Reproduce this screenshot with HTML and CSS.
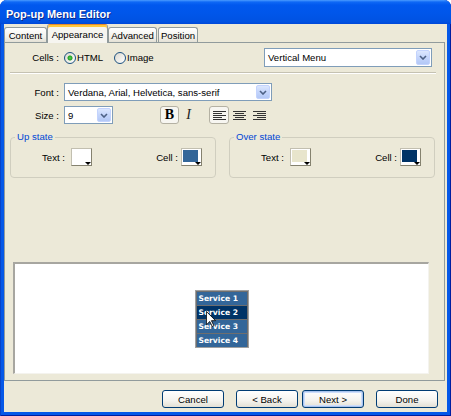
FILE: index.html
```html
<!DOCTYPE html>
<html>
<head>
<meta charset="utf-8">
<title>Pop-up Menu Editor</title>
<link rel="stylesheet" href="styles.css">
</head>
<body>
<div class="window">
  <div class="titlebar">Pop-up Menu Editor</div>
  <div class="client">
    <div class="tabs">
      <div class="tab t-content">Content</div>
      <div class="tab active t-appear">Appearance</div>
      <div class="tab t-adv">Advanced</div>
      <div class="tab t-pos">Position</div>
    </div>
    <div class="panel">
      <div class="row row-cells">
        <span class="lbl">Cells :</span>
        <span class="radio checked"></span><span class="rtext rtext1">HTML</span>
        <span class="radio"></span><span class="rtext">Image</span>
        <div class="select sel-type">
          <span class="val">Vertical Menu</span>
          <span class="dd"><svg width="8" height="5" viewBox="0 0 8 5"><polyline points="1,1 4,4 7,1" fill="none" stroke="#4d6185" stroke-width="1.6"/></svg></span>
        </div>
      </div>
      <div class="sep"></div>
      <div class="row row-font">
        <span class="lbl">Font :</span>
        <div class="select sel-font">
          <span class="val">Verdana, Arial, Helvetica, sans-serif</span>
          <span class="dd"><svg width="8" height="5" viewBox="0 0 8 5"><polyline points="1,1 4,4 7,1" fill="none" stroke="#4d6185" stroke-width="1.6"/></svg></span>
        </div>
      </div>
      <div class="row row-size">
        <span class="lbl">Size :</span>
        <div class="select sel-size">
          <span class="val">9</span>
          <span class="dd"><svg width="8" height="5" viewBox="0 0 8 5"><polyline points="1,1 4,4 7,1" fill="none" stroke="#4d6185" stroke-width="1.6"/></svg></span>
        </div>
        <div class="tbtn pressed tb-bold">B</div>
        <div class="tbtn tb-ital">I</div>
        <div class="tbtn pressed tb-align first-align">
          <svg width="13" height="9" viewBox="0 0 13 9"><g stroke="#333" stroke-width="1"><line x1="0" y1="0.5" x2="13" y2="0.5"/><line x1="0" y1="2.5" x2="9" y2="2.5"/><line x1="0" y1="4.5" x2="13" y2="4.5"/><line x1="0" y1="6.5" x2="9" y2="6.5"/><line x1="0" y1="8.5" x2="13" y2="8.5"/></g></svg>
        </div>
        <div class="tbtn tb-align">
          <svg width="13" height="9" viewBox="0 0 13 9"><g stroke="#333" stroke-width="1"><line x1="0" y1="0.5" x2="13" y2="0.5"/><line x1="2" y1="2.5" x2="11" y2="2.5"/><line x1="0" y1="4.5" x2="13" y2="4.5"/><line x1="2" y1="6.5" x2="11" y2="6.5"/><line x1="0" y1="8.5" x2="13" y2="8.5"/></g></svg>
        </div>
        <div class="tbtn tb-align">
          <svg width="13" height="9" viewBox="0 0 13 9"><g stroke="#333" stroke-width="1"><line x1="0" y1="0.5" x2="13" y2="0.5"/><line x1="4" y1="2.5" x2="13" y2="2.5"/><line x1="0" y1="4.5" x2="13" y2="4.5"/><line x1="4" y1="6.5" x2="13" y2="6.5"/><line x1="0" y1="8.5" x2="13" y2="8.5"/></g></svg>
        </div>
      </div>
      <div class="groups">
        <fieldset class="group">
          <legend>Up state</legend>
          <div class="gin">
            <span class="glbl">Text :</span>
            <span class="swatch"><span class="fill" style="background:#ffffff"></span></span>
            <span class="glbl cell-lbl">Cell :</span>
            <span class="swatch"><span class="fill" style="background:#336699"></span></span>
          </div>
        </fieldset>
        <fieldset class="group">
          <legend>Over state</legend>
          <div class="gin">
            <span class="glbl">Text :</span>
            <span class="swatch"><span class="fill" style="background:#e8e5cc"></span></span>
            <span class="glbl cell-lbl">Cell :</span>
            <span class="swatch"><span class="fill" style="background:#003366"></span></span>
          </div>
        </fieldset>
      </div>
      <div class="preview">
        <div class="menu">
          <div class="mi">Service 1</div>
          <div class="mi over">Service 2</div>
          <div class="mi">Service 3</div>
          <div class="mi">Service 4</div>
        </div>
        <svg class="cursor" width="10" height="16" viewBox="0 0 12 19"><path d="M0.5,0.5 L0.5,16.5 L4.5,12.5 L7.5,18.5 L9.5,17.5 L6.5,11.5 L11.5,11.5 Z" fill="#fff" stroke="#000" stroke-width="1"/></svg>
      </div>
    </div>
    <div class="footer">
      <div class="btn">Cancel</div>
      <div class="btn b-back">&lt; Back</div>
      <div class="btn b-next default">Next &gt;</div>
      <div class="btn b-done">Done</div>
    </div>
  </div>
</div>
</body>
</html>
```
FILE: styles.css
```css
* { box-sizing: border-box; }
html, body { margin: 0; padding: 0; background: #fff; }
body {
  font-family: "Liberation Sans", Arial, sans-serif;
  font-size: 9.6px;
  color: #000;
}
.window {
  width: 451px;
  height: 416px;
  display: flex;
  flex-direction: column;
  background: #0558e8;
  border-radius: 7px 7px 0 0;
  overflow: hidden;
  box-shadow: inset 1px 0 #0843c8, inset -1px 0 #001ea0, inset 0 -1px #001ea0;
}
.titlebar {
  height: 24px;
  flex: none;
  display: flex;
  align-items: center;
  padding: 3px 0 0 6px;
  color: #fff;
  font-weight: bold;
  font-size: 11px;
  text-shadow: 1px 1px #0c2a8c;
  background: linear-gradient(#4a9bff 0, #0e68f6 2px, #0058ee 5px, #0056ea 55%, #0052e2 90%, #0048d8 100%);
}
.client {
  flex: 1;
  margin: 0 4px 4px 4px;
  background: #ece9d8;
  display: flex;
  flex-direction: column;
}
.tabs {
  height: 18px;
  flex: none;
  display: flex;
  align-items: flex-end;
  position: relative;
  z-index: 1;
}
.tab {
  height: 15px;
  border: 1px solid #919b9c;
  border-bottom: none;
  border-radius: 3px 3px 0 0;
  background: linear-gradient(#ffffff, #f3f2ec 60%, #e4e1d6);
  display: flex;
  align-items: center;
  justify-content: center;
  padding-top: 1px;
}
.t-content { width: 43px; }
.t-appear { width: 61px; }
.t-adv { width: 49px; margin-right: 1px; }
.t-pos { width: 40px; }
.tab.active {
  height: 19px;
  margin-bottom: -1px;
  background: #f6f5f0;
  border-top: 1px solid #e68b2c;
  box-shadow: inset 0 2px #ffc83c;
  padding-top: 0;
}
.panel {
  height: 339px;
  flex: none;
  margin-right: 2px;
  border: 1px solid #919b9c;
  display: flex;
  flex-direction: column;
  padding-top: 5px;
}
.row {
  display: flex;
  align-items: center;
  flex: none;
}
.lbl {
  width: 54px;
  margin-right: 5px;
  text-align: right;
  flex: none;
}
.row-cells { height: 19px; padding-right: 12px; }
.radio {
  width: 12px;
  height: 12px;
  border-radius: 50%;
  border: 1px solid #1c5180;
  background: linear-gradient(135deg, #dcd9cf, #ffffff);
  margin-right: 1px;
  flex: none;
}
.radio.checked {
  background: radial-gradient(circle, #5cd05c 0, #21a121 2px, rgba(33,161,33,0) 3px), linear-gradient(135deg, #dcd9cf, #ffffff);
}
.rtext1 { width: 37px; }
.select {
  display: flex;
  align-items: stretch;
  border: 1px solid #7f9db9;
  background: #fff;
  padding: 1px;
  flex: none;
}
.select .val {
  flex: 1;
  padding-left: 2px;
  display: flex;
  align-items: center;
  white-space: nowrap;
  overflow: hidden;
}
.select .dd {
  width: 14px;
  flex: none;
  border: 1px solid #c3d3fd;
  border-radius: 2px;
  background: linear-gradient(#dce7fe, #c4d5fb 50%, #b3c8f6);
  display: flex;
  align-items: center;
  justify-content: center;
}
.sel-type { margin-left: auto; width: 168px; height: 19px; }
.sep {
  flex: none;
  height: 2px;
  margin: 5px 8px 0 5px;
  border-top: 1px solid #c5c2b2;
  border-bottom: 1px solid #ffffff;
}
.row-font { margin-top: 9px; height: 18px; }
.sel-font { width: 208px; height: 18px; }
.row-size { margin-top: 5px; height: 18px; }
.sel-size { width: 49px; height: 18px; }
.tbtn {
  width: 19px;
  height: 18px;
  border: 1px solid transparent;
  border-radius: 3px;
  display: flex;
  align-items: center;
  justify-content: center;
  flex: none;
}
.tbtn.pressed {
  border-color: #b4b1a3;
  background: #f7f6f1;
}
.tb-bold {
  margin-left: 47px;
  font-family: "Liberation Serif", "Times New Roman", serif;
  font-weight: bold;
  font-size: 14px;
}
.tb-ital {
  font-family: "Liberation Serif", "Times New Roman", serif;
  font-style: italic;
  font-size: 14px;
  color: #222;
}
.tb-align { width: 20px; }
.first-align { margin-left: 11px; }
.groups {
  display: flex;
  gap: 13px;
  margin-top: 7px;
  padding-left: 5px;
  flex: none;
}
.group {
  width: 206px;
  margin: 0;
  padding: 0;
  border: 1px solid #d0cebf;
  border-radius: 4px;
  min-width: 0;
}
.group legend {
  margin-left: 4px;
  padding: 0 2px;
  line-height: 12px;
  font-size: 9.6px;
  color: #0046d5;
}
.gin {
  display: flex;
  align-items: center;
  padding: 5px 13px 11px 31px;
}
.glbl { margin-right: 6px; }
.cell-lbl { margin-left: auto; margin-right: 3px; }
.swatch {
  position: relative;
  width: 21px;
  height: 18px;
  border: 1px solid;
  border-color: #c2bfb0 #85826f #85826f #c2bfb0;
  background: #fff;
  padding: 1px 3px 3px 1px;
  flex: none;
}
.swatch .fill {
  display: block;
  width: 100%;
  height: 100%;
}
.swatch::after {
  content: "";
  position: absolute;
  right: 0;
  bottom: 0;
  border-left: 3px solid transparent;
  border-right: 3px solid transparent;
  border-top: 3px solid #000;
}
.preview {
  position: relative;
  flex: none;
  width: 416px;
  height: 112px;
  margin: auto 0 6px 8px;
  background: #fff;
  border-style: solid;
  border-width: 2px 1px 1px 2px;
  border-color: #a7a6a0 #f4f3ee #f4f3ee #a7a6a0;
  display: flex;
  align-items: center;
  justify-content: center;
}
.menu {
  width: 54px;
  border: 1px solid #a0a0a0;
  background: #6e6e6e;
  padding: 1px 1px 0 1px;
  display: flex;
  flex-direction: column;
  gap: 1px;
}
.mi {
  height: 13px;
  background: #336699;
  color: #fff;
  font-family: "DejaVu Sans", Verdana, sans-serif;
  font-weight: bold;
  font-size: 7.6px;
  padding-left: 2px;
  display: flex;
  align-items: center;
  white-space: nowrap;
}
.mi.over { background: #003366; }
.cursor {
  position: absolute;
  left: 191px;
  top: 47px;
}
.footer {
  flex: 1;
  display: flex;
  justify-content: flex-end;
  align-items: flex-start;
  padding: 9px 9px 0 0;
}
.btn {
  width: 62px;
  height: 18px;
  border: 1px solid #003c74;
  border-radius: 3px;
  background: linear-gradient(#ffffff, #f4f3ee 60%, #e3e0d5);
  display: flex;
  align-items: center;
  justify-content: center;
}
.b-back { margin-left: 12px; }
.b-next { margin-left: 4px; }
.b-done { margin-left: 12px; }
.btn.default { box-shadow: inset 0 0 0 1px #a9c4ee, inset 0 0 0 2px #cedefb; }
```
